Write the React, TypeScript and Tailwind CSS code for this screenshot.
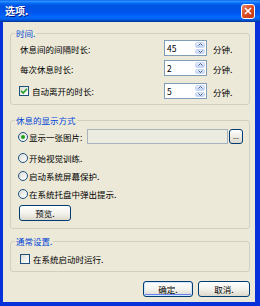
import React from "react";

const F = "font-['Noto_Sans_CJK_SC','Noto_Sans',sans-serif]";

function Arrow({ up }: { up?: boolean }) {
  return (
    <svg width="5" height="3" viewBox="0 0 5 3">
      <path d={up ? "M0.5 2.5 L2.5 0.5 L4.5 2.5" : "M0.5 0.5 L2.5 2.5 L4.5 0.5"} fill="none" stroke="#4D6185" strokeWidth="1" />
    </svg>
  );
}

function Spinner({ v }: { v: string }) {
  return (
    <div className="flex h-[16px] w-[43px] border border-[#7F9DB9] bg-white">
      <div className="flex-1 pl-[2px] text-[8.5px] leading-[14px] text-black">{v}</div>
      <div className="flex w-[12px] flex-col gap-[1px] p-[1px]">
        <div className="flex flex-1 items-center justify-center rounded-[2px] border border-[#CAD8F8] bg-gradient-to-b from-[#E8EFFD] to-[#C2D3F7]">
          <Arrow up />
        </div>
        <div className="flex flex-1 items-center justify-center rounded-[2px] border border-[#CAD8F8] bg-gradient-to-b from-[#E8EFFD] to-[#C2D3F7]">
          <Arrow />
        </div>
      </div>
    </div>
  );
}

function Checkbox({ checked }: { checked?: boolean }) {
  return (
    <div className="flex h-[10px] w-[10px] items-center justify-center border border-[#1C5180] bg-gradient-to-br from-[#DCDCD7] to-white">
      {checked && (
        <svg width="8" height="8" viewBox="0 0 8 8">
          <path d="M1 3.8 L3.2 6 L7 1.8" fill="none" stroke="#21A121" strokeWidth="1.6" />
        </svg>
      )}
    </div>
  );
}

function Radio({ checked }: { checked?: boolean }) {
  return (
    <div className="flex h-[10px] w-[10px] items-center justify-center rounded-full border border-[#1C5180] bg-gradient-to-br from-[#DCDCD7] to-white">
      {checked && <div className="h-[4px] w-[4px] rounded-full bg-[#21A121]" />}
    </div>
  );
}

function XPButton({ children, w, def }: { children: React.ReactNode; w: string; def?: boolean }) {
  return (
    <div
      className={`flex h-[16px] ${w} items-center justify-center rounded-[3px] border border-[#003C74] bg-gradient-to-b from-white via-[#F4F3EE] to-[#DCD8CB] text-[8.5px] leading-[12px] text-black ${
        def ? "shadow-[inset_0_0_0_1px_#CEE7FF,inset_0_-1px_0_1px_#6982EE]" : ""
      }`}
    >
      {children}
    </div>
  );
}

function Group({ title, children, className }: { title: string; children: React.ReactNode; className?: string }) {
  return (
    <div className={`relative ml-[7px] w-[240px] rounded-[3px] border border-[#D0D0BF] ${className ?? ""}`}>
      <div className="absolute left-[4px] top-[-7px] bg-[#ECE9D8] px-[1px] text-[8.5px] leading-[12px] text-[#0046D5]">{title}</div>
      {children}
    </div>
  );
}

export default function App() {
  return (
    <div className={`${F} flex h-[306px] w-[260px] flex-col bg-[#0831D9]`}>
      {/* title bar */}
      <div className="flex h-[22px] items-center justify-between bg-[linear-gradient(to_bottom,#0058EE_0%,#3593FF_5%,#288EFF_8%,#127DFF_11%,#036FFC_14%,#0262EE_18%,#0057E5_24%,#0054E3_30%,#0055EB_56%,#005BF5_66%,#026AFE_76%,#0062EF_86%,#0052D6_92%,#0040AB_96%,#003092_100%)] pl-[5px] pr-[5px]">
        <span className="text-[10px] font-bold leading-[12px] text-white [text-shadow:1px_1px_#0A1883]">选项.</span>
        <div className="flex h-[15px] w-[14px] items-center justify-center rounded-[3px] border border-white bg-gradient-to-br from-[#E5846A] via-[#D9491F] to-[#C2351B]">
          <svg width="8" height="8" viewBox="0 0 8 8">
            <path d="M1 1 L7 7 M7 1 L1 7" stroke="white" strokeWidth="1.6" />
          </svg>
        </div>
      </div>
      {/* client */}
      <div className="ml-[3px] mr-[5px] flex h-[280px] flex-col bg-[#ECE9D8] text-[8.5px] leading-[12px] text-black">
        <Group title="时间." className="mt-[11px] pb-[5px] pt-[6px]">
          <div className="flex h-[16px] items-center pl-[9px]">
            <span className="w-[144px] pt-[2px]">休息间的间隔时长:</span>
            <Spinner v="45" />
            <span className="ml-[6px] pt-[1px]">分钟.</span>
          </div>
          <div className="mt-[4px] flex h-[16px] items-center pl-[9px]">
            <span className="w-[144px] pt-[2px]">每次休息时长:</span>
            <Spinner v="2" />
            <span className="ml-[6px] pt-[1px]">分钟.</span>
          </div>
          <div className="mt-[7px] flex h-[16px] items-center pl-[8px]">
            <div className="flex w-[145px] items-center gap-[3px]">
              <Checkbox checked />
              <span>自动离开的时长:</span>
            </div>
            <Spinner v="5" />
            <span className="ml-[6px] pt-[1px]">分钟.</span>
          </div>
        </Group>

        <Group title="休息的显示方式" className="mt-[15px] pb-[7px] pt-[8px]">
          <div className="flex h-[15px] items-center pl-[7px]">
            <Radio checked />
            <span className="ml-[1px] w-[58px]">显示一张图片:</span>
            <div className="h-[15px] w-[141px] border border-[#A7B2BC] bg-[#ECEBE0]" />
            <div className="ml-[1px] flex h-[15px] w-[14px] items-end justify-center rounded-[3px] border border-[#003C74] bg-gradient-to-b from-white to-[#DCD8CB] pb-[3px] text-[7px] leading-[7px]">
              ...
            </div>
          </div>
          <div className="mt-[6px] flex h-[15px] items-center gap-[1px] pl-[7px]">
            <Radio />
            <span>开始视觉训练.</span>
          </div>
          <div className="mt-[3px] flex h-[15px] items-center gap-[1px] pl-[7px]">
            <Radio />
            <span>启动系统屏幕保护.</span>
          </div>
          <div className="mt-[3px] flex h-[15px] items-center gap-[1px] pl-[7px]">
            <Radio />
            <span>在系统托盘中弹出提示.</span>
          </div>
          <div className="mt-[4px] pl-[8px]">
            <XPButton w="w-[52px]">预览.</XPButton>
          </div>
        </Group>

        <Group title="通常设置." className="mt-[12px] pb-[6px] pt-[10px]">
          <div className="flex h-[13px] items-center gap-[3px] pl-[9px]">
            <Checkbox />
            <span>在系统启动时运行.</span>
          </div>
        </Group>

        <div className="mr-[5px] mt-[9px] flex justify-end gap-[5px]">
          <XPButton w="w-[50px]" def>
            确定.
          </XPButton>
          <XPButton w="w-[52px]">取消.</XPButton>
        </div>
      </div>
    </div>
  );
}
